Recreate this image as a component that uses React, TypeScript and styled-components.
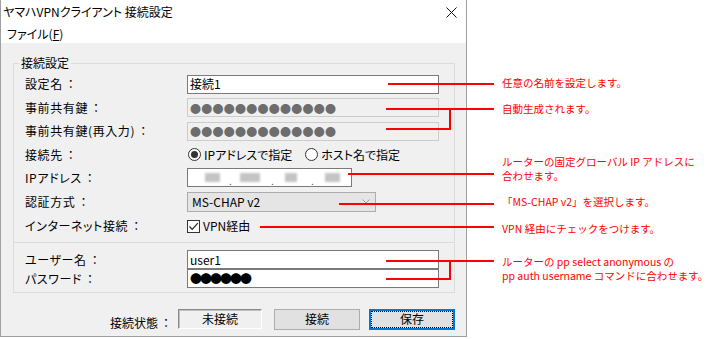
import styled, { createGlobalStyle } from 'styled-components';

const GlobalStyle = createGlobalStyle`
  html, body { margin: 0; padding: 0; background: #fff; }
  body {
    font-family: "Noto Sans CJK JP", "Noto Sans", sans-serif;
    font-size: 12px;
    color: #000;
  }
  * { box-sizing: border-box; }
`;

const Page = styled.div`
  position: relative;
  display: flex;
  width: 714px;
  height: 339px;
  overflow: hidden;
`;

const Window = styled.div`
  width: 467px;
  height: 337px;
  display: flex;
  flex-direction: column;
  border: 1px solid #a0a0a0;
  border-top: none;
  background: #fff;
  font-feature-settings: "palt";
`;

const TitleBar = styled.div`
  height: 24px;
  display: flex;
  align-items: center;
  justify-content: space-between;
  padding: 0 9px 0 2px;
  font-size: 12px;
  line-height: 14px;
`;

const MenuBar = styled.div`
  height: 19px;
  display: flex;
  align-items: center;
  padding-left: 6px;
  font-size: 12px;
  line-height: 14px;
`;

const Body = styled.div`
  flex: 1;
  background: #f0f0f0;
  padding: 13px 11px 0 12px;
`;

const Group = styled.fieldset`
  margin: 0;
  min-width: 0;
  border: 1px solid #dcdcdc;
  padding: 2px 12px 4px 11px;
`;

const Legend = styled.legend`
  padding: 0 2px;
  margin-left: -6px;
  font-size: 12px;
  line-height: 14px;
`;

const SubGroup = styled.div`
  border: 1px solid #dcdcdc;
  border-top: none;
  padding: 7px 12px 4px 11px;
`;

const Row = styled.div<{ $h: number }>`
  display: grid;
  grid-template-columns: 162px 1fr;
  align-items: center;
  height: ${(p) => p.$h}px;
`;

const Label = styled.span`
  font-size: 12px;
  line-height: 14px;
  white-space: nowrap;
  letter-spacing: 0.6px;
`;

const Colon = styled.span`
  font-feature-settings: normal;
  margin-left: 2px;
`;

const Field = styled.div<{ $w: number; $disabled?: boolean }>`
  width: ${(p) => p.$w}px;
  height: 19px;
  display: flex;
  align-items: center;
  padding-left: 2px;
  border: 1px solid ${(p) => (p.$disabled ? '#cccccc' : '#7a7a7a')};
  background: ${(p) => (p.$disabled ? '#f0f0f0' : '#fff')};
  font-size: 12px;
  line-height: 14px;
  white-space: nowrap;
  overflow: hidden;
`;

const Masked = styled.span<{ $dark?: boolean }>`
  font-feature-settings: normal;
  color: ${(p) => (p.$dark ? '#000' : '#6d6d6d')};
  font-size: ${(p) => (p.$dark ? 12 : 11)}px;
  letter-spacing: ${(p) => (p.$dark ? -2 : 0.25)}px;
  line-height: 14px;
`;

const Octet = styled.span<{ $w: number; $ml: number }>`
  display: inline-block;
  width: ${(p) => p.$w}px;
  height: 9px;
  margin-left: ${(p) => p.$ml}px;
  background: #c4c4c4;
  filter: blur(1.3px);
`;

const IpDot = styled.span<{ $ml: number }>`
  display: inline-block;
  width: 3px;
  margin-left: ${(p) => p.$ml}px;
  margin-top: 6px;
  color: #555;
  font-size: 10px;
  line-height: 10px;
`;

const Options = styled.div`
  display: flex;
  align-items: center;
`;

const Choice = styled.label<{ $gap?: number }>`
  display: flex;
  align-items: center;
  gap: 3px;
  margin-right: ${(p) => p.$gap ?? 0}px;
  font-size: 12px;
  line-height: 14px;
`;

const RadioCircle = styled.span<{ $on?: boolean }>`
  width: 13px;
  height: 13px;
  margin-left: 1px;
  border-radius: 50%;
  border: 1px solid #333;
  background: #fff;
  display: flex;
  align-items: center;
  justify-content: center;
  &::after {
    content: '';
    width: 7px;
    height: 7px;
    border-radius: 50%;
    background: ${(p) => (p.$on ? '#333' : 'transparent')};
  }
`;

const CheckBox = styled.span`
  width: 13px;
  height: 13px;
  border: 1px solid #333;
  background: #fff;
  display: flex;
  align-items: center;
  justify-content: center;
`;

const Select = styled.div`
  width: 189px;
  height: 20px;
  display: flex;
  align-items: center;
  justify-content: space-between;
  padding: 0 5px 0 4px;
  border: 1px solid #adadad;
  background: #e5e5e5;
  font-size: 12px;
  line-height: 14px;
`;

const Footer = styled.div`
  display: flex;
  justify-content: flex-end;
  align-items: center;
  padding-top: 15px;
`;

const StatusLabel = styled.span`
  margin-right: 6px;
  margin-top: 8px;
  font-size: 12px;
  line-height: 14px;
`;

const StatusBox = styled.div`
  width: 84px;
  height: 20px;
  margin-right: 12px;
  display: flex;
  align-items: center;
  justify-content: center;
  border: 1px solid;
  border-color: #8a8a8a #ffffff #ffffff #8a8a8a;
  box-shadow: inset 1px 1px 0 #c0c0c0;
  font-size: 12px;
  line-height: 14px;
`;

const Button = styled.div<{ $primary?: boolean; $mr?: number }>`
  width: 86px;
  height: 21px;
  margin-right: ${(p) => p.$mr ?? 0}px;
  display: flex;
  align-items: center;
  justify-content: center;
  background: #e1e1e1;
  border: 1px solid ${(p) => (p.$primary ? '#0078d7' : '#adadad')};
  box-shadow: ${(p) => (p.$primary ? 'inset 0 0 0 1px #0078d7' : 'none')};
  outline: ${(p) => (p.$primary ? '1px dotted #000' : 'none')};
  outline-offset: -3px;
  font-size: 12px;
  line-height: 14px;
`;

const Notes = styled.div`
  display: flex;
  flex-direction: column;
  padding-left: 35px;
`;

const Note = styled.div<{ $mt: number }>`
  margin-top: ${(p) => p.$mt}px;
  color: #f00;
  font-size: 10.5px;
  line-height: 14px;
  white-space: nowrap;
`;

const Callouts = styled.svg`
  position: absolute;
  left: 0;
  top: 0;
  pointer-events: none;
`;

const lines: [number, number, number, number][] = [
  [388, 84, 494, 84],
  [386, 109, 494, 109],
  [386, 129, 451, 129],
  [450, 108, 450, 130],
  [348, 174, 494, 174],
  [339, 204, 494, 204],
  [260, 227, 494, 227],
  [386, 261, 494, 261],
  [386, 279, 451, 279],
  [450, 260, 450, 280],
];

export default function App() {
  return (
    <>
      <GlobalStyle />
      <Page>
        <Window>
          <TitleBar>
            <span>ヤマハVPNクライアント 接続設定</span>
            <svg width="11" height="11" viewBox="0 0 11 11">
              <path d="M0.5 0.5 L10.5 10.5 M10.5 0.5 L0.5 10.5" stroke="#111" strokeWidth="1" />
            </svg>
          </TitleBar>
          <MenuBar>
            <span>
              ファイル(<u>F</u>)
            </span>
          </MenuBar>
          <Body>
            <Group>
              <Legend>接続設定</Legend>
              <Row $h={24}>
                <Label>設定名<Colon>：</Colon></Label>
                <Field $w={252}>接続1</Field>
              </Row>
              <Row $h={23}>
                <Label>事前共有鍵<Colon>：</Colon></Label>
                <Field $w={252} $disabled>
                  <Masked>●●●●●●●●●●●●●</Masked>
                </Field>
              </Row>
              <Row $h={24}>
                <Label>事前共有鍵(再入力)<Colon>：</Colon></Label>
                <Field $w={252} $disabled>
                  <Masked>●●●●●●●●●●●●●</Masked>
                </Field>
              </Row>
              <Row $h={23}>
                <Label>接続先<Colon>：</Colon></Label>
                <Options>
                  <Choice $gap={12}>
                    <RadioCircle $on />
                    IPアドレスで指定
                  </Choice>
                  <Choice>
                    <RadioCircle />
                    ホスト名で指定
                  </Choice>
                </Options>
              </Row>
              <Row $h={23}>
                <Label>IPアドレス<Colon>：</Colon></Label>
                <Field $w={165}>
                  <Octet $w={15} $ml={15} />
                  <IpDot $ml={9}>.</IpDot>
                  <Octet $w={20} $ml={8} />
                  <IpDot $ml={11}>.</IpDot>
                  <Octet $w={12} $ml={11} />
                  <IpDot $ml={14}>.</IpDot>
                  <Octet $w={15} $ml={11} />
                </Field>
              </Row>
              <Row $h={25}>
                <Label>認証方式<Colon>：</Colon></Label>
                <Select>
                  <span>MS-CHAP v2</span>
                  <svg width="8" height="5" viewBox="0 0 8 5">
                    <path d="M0.5 0.5 L4 4 L7.5 0.5" stroke="#a0a0a0" strokeWidth="1" fill="none" />
                  </svg>
                </Select>
              </Row>
              <Row $h={24}>
                <Label>インターネット接続<Colon>：</Colon></Label>
                <Options>
                  <Choice>
                    <CheckBox>
                      <svg width="11" height="11" viewBox="0 0 11 11">
                        <path d="M1.5 5.5 L4.2 8.3 L9.8 2.2" stroke="#222" strokeWidth="1.2" fill="none" />
                      </svg>
                    </CheckBox>
                    VPN経由
                  </Choice>
                </Options>
              </Row>
            </Group>
            <SubGroup>
              <Row $h={19}>
                <Label>ユーザー名<Colon>：</Colon></Label>
                <Field $w={252}>user1</Field>
              </Row>
              <Row $h={19}>
                <Label>パスワード<Colon>：</Colon></Label>
                <Field $w={252}>
                  <Masked $dark>●●●●●●</Masked>
                </Field>
              </Row>
            </SubGroup>
            <Footer>
              <StatusLabel>接続状態<Colon>：</Colon></StatusLabel>
              <StatusBox>未接続</StatusBox>
              <Button $mr={9}>接続</Button>
              <Button $primary>保存</Button>
            </Footer>
          </Body>
        </Window>
        <Notes>
          <Note $mt={76}>任意の名前を設定します。</Note>
          <Note $mt={12}>自動生成されます。</Note>
          <Note $mt={39}>
            ルーターの固定グローバル IP アドレスに
            <br />
            合わせます。
          </Note>
          <Note $mt={12}>「MS-CHAP v2」を選択します。</Note>
          <Note $mt={13}>VPN 経由にチェックをつけます。</Note>
          <Note $mt={19}>
            ルーターの pp select anonymous の
            <br />
            pp auth username コマンドに合わせます。
          </Note>
        </Notes>
        <Callouts width="714" height="339" viewBox="0 0 714 339">
          {lines.map(([x1, y1, x2, y2], i) => (
            <line key={i} x1={x1} y1={y1} x2={x2} y2={y2} stroke="#ff0000" strokeWidth="2" />
          ))}
        </Callouts>
      </Page>
    </>
  );
}
